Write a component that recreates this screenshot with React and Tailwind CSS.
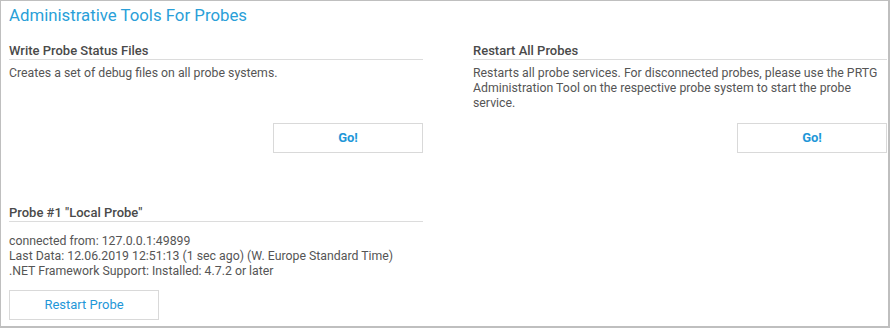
export default function App() {
  return (
    <div className="w-[890px] h-[328px] box-border border-l border-t border-r-2 border-b-2 border-[#bfbfbf] bg-white pl-2 font-['Roboto',sans-serif]">
      <h1 className="pt-[4px] text-[16.8px] leading-[20px] font-normal text-[#2a9fd8]">
        Administrative Tools For Probes
      </h1>
      <div className="mt-[18px] grid grid-cols-[414px_414px] gap-x-[50px]">
        <div className="flex flex-col">
          <h2 className="text-[13px] leading-4 font-medium text-[#4a4a4a] border-b border-[#dcdcdc]">
            Write Probe Status Files
          </h2>
          <p className="mt-[6px] flex-1 text-[12.3px] leading-[15px] text-[#555]">
            Creates a set of debug files on all probe systems.
          </p>
          <button className="mt-3 self-end w-[150px] h-[30px] border border-[#d9d9d9] bg-white text-[13px] font-bold text-[#1f97d8]">
            Go!
          </button>
        </div>
        <div className="flex flex-col">
          <h2 className="text-[13px] leading-4 font-medium text-[#4a4a4a] border-b border-[#dcdcdc]">
            Restart All Probes
          </h2>
          <p className="mt-[6px] flex-1 text-[12.3px] leading-[15px] text-[#555]">
            Restarts all probe services. For disconnected probes, please use the PRTG Administration Tool on the respective probe system to start the probe service.
          </p>
          <button className="mt-3 self-end w-[150px] h-[30px] border border-[#d9d9d9] bg-white text-[13px] font-bold text-[#1f97d8]">
            Go!
          </button>
        </div>
      </div>
      <div className="mt-[52px] w-[414px] flex flex-col">
        <h2 className="text-[13px] leading-4 font-medium text-[#4a4a4a] border-b border-[#dcdcdc]">
          Probe #1 "Local Probe"
        </h2>
        <div className="mt-3 text-[12.3px] leading-[15px] text-[#555]">
          <div>connected from: 127.0.0.1:49899</div>
          <div>Last Data: 12.06.2019 12:51:13 (1 sec ago) (W. Europe Standard Time)</div>
          <div>.NET Framework Support: Installed: 4.7.2 or later</div>
        </div>
        <button className="mt-[11px] w-[150px] h-[30px] border border-[#d9d9d9] bg-white text-[13px] font-normal text-[#1f97d8]">
          Restart Probe
        </button>
      </div>
    </div>
  );
}
